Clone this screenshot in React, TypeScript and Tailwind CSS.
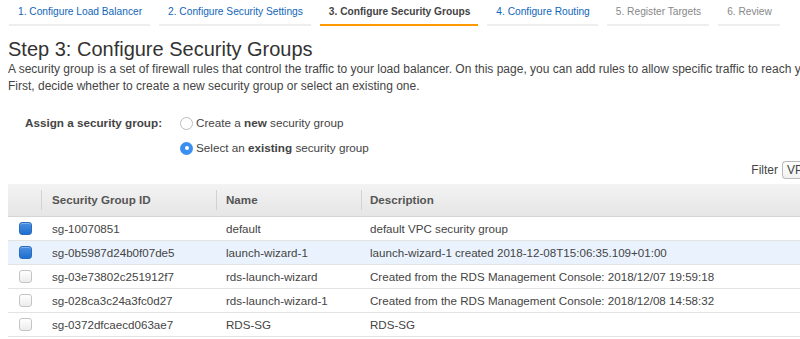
import { useState } from 'react'

interface SecurityGroup {
    id: string
    name: string
    description: string
}

const tabs = [
    { label: '1. Configure Load Balancer', state: 'done' },
    { label: '2. Configure Security Settings', state: 'done' },
    { label: '3. Configure Security Groups', state: 'active' },
    { label: '4. Configure Routing', state: 'done' },
    { label: '5. Register Targets', state: 'todo' },
    { label: '6. Review', state: 'todo' },
]

const groups: SecurityGroup[] = [
    { id: 'sg-10070851', name: 'default', description: 'default VPC security group' },
    { id: 'sg-0b5987d24b0f07de5', name: 'launch-wizard-1', description: 'launch-wizard-1 created 2018-12-08T15:06:35.109+01:00' },
    { id: 'sg-03e73802c251912f7', name: 'rds-launch-wizard', description: 'Created from the RDS Management Console: 2018/12/07 19:59:18' },
    { id: 'sg-028ca3c24a3fc0d27', name: 'rds-launch-wizard-1', description: 'Created from the RDS Management Console: 2018/12/08 14:58:32' },
    { id: 'sg-0372dfcaecd063ae7', name: 'RDS-SG', description: 'RDS-SG' },
]

function Checkbox({ checked }: { checked: boolean }) {
    return checked ? (
        <span className="block w-[13px] h-[13px] rounded-[3px] bg-gradient-to-b from-[#4a90e2] to-[#1f6fcf] border border-[#2a6cc0] shadow-[inset_0_1px_0_rgba(255,255,255,0.3)]" />
    ) : (
        <span className="block w-[13px] h-[13px] rounded-[3px] bg-gradient-to-b from-white to-[#ececec] border border-[#c4c4c4]" />
    )
}

function Radio({ on }: { on: boolean }) {
    return on ? (
        <span className="flex items-center justify-center w-[13px] h-[13px] rounded-full bg-[#3b8ff0]">
            <span className="w-[4px] h-[4px] rounded-full bg-white" />
        </span>
    ) : (
        <span className="w-[13px] h-[13px] rounded-full border border-[#bbb] bg-white" />
    )
}

export default function App() {
    const [selected, setSelected] = useState<string[]>(['sg-10070851', 'sg-0b5987d24b0f07de5'])
    const [mode, setMode] = useState<'new' | 'existing'>('existing')

    const toggle = (id: string) => {
        setSelected(prev => prev.includes(id) ? prev.filter(x => x !== id) : [...prev, id])
    }

    return (
        <div className="w-[800px] h-[339px] overflow-hidden bg-white text-[#444] font-['Liberation_Sans',Arial,sans-serif]">
            {/* wizard tabs */}
            <div className="flex gap-[9px] pl-[9px] pt-[4px] whitespace-nowrap">
                {tabs.map(tab => (
                    <div
                        key={tab.label}
                        className={`
                            pl-[9px]
                            pr-[8px]
                            h-[22px]
                            text-[10.2px]
                            leading-[16px]
                            border-b-2
                            ${tab.state === 'active' ? 'border-[#f90] text-[#444] font-bold' : 'border-[#eee]'}
                            ${tab.state === 'done' ? 'text-[#1166bb]' : ''}
                            ${tab.state === 'todo' ? 'text-[#888]' : ''}
                        `}
                    >
                        {tab.label}
                    </div>
                ))}
            </div>

            <div className="px-[8px] whitespace-nowrap">
                <h1 className="text-[20px] leading-[24px] mt-[11px] text-[#333]">Step 3: Configure Security Groups</h1>
                <p className="text-[12px] leading-[17px]">
                    A security group is a set of firewall rules that control the traffic to your load balancer. On this page, you can add rules to allow specific traffic to reach your load balancer.
                </p>
                <p className="text-[12px] leading-[17px]">
                    First, decide whether to create a new security group or select an existing one.
                </p>
            </div>

            {/* assign */}
            <div className="flex mt-[20px] pl-[25px] text-[11.7px]">
                <div className="w-[155px] font-bold leading-[16px]">Assign a security group:</div>
                <div className="flex flex-col gap-[9px]">
                    <label className="flex items-center gap-[3px] leading-[16px] cursor-pointer" onClick={() => setMode('new')}>
                        <Radio on={mode === 'new'} />
                        <span>Create a <b>new</b> security group</span>
                    </label>
                    <label className="flex items-center gap-[3px] leading-[16px] cursor-pointer" onClick={() => setMode('existing')}>
                        <Radio on={mode === 'existing'} />
                        <span>Select an <b>existing</b> security group</span>
                    </label>
                </div>
            </div>

            {/* filter */}
            <div className="flex justify-end items-center gap-[4px] mt-[5px] text-[12px] h-[18px]">
                <span>Filter</span>
                <span className="w-[18px] h-[18px] border border-r-0 border-[#bbb] rounded-l-[4px] pl-[4px] leading-[16px] bg-gradient-to-b from-white to-[#f2f2f2] overflow-hidden whitespace-nowrap">VPC</span>
            </div>

            {/* table */}
            <div className="ml-[8px] mt-[5px] text-[11.6px]">
                <div className="flex h-[33px] items-center bg-gradient-to-b from-[#f3f3f3] to-[#e6e6e6] border-b border-[#d5d5d5] font-bold text-[#555]">
                    <div className="w-[33px] h-[20px]" />
                    <div className="w-[175px] h-[20px] border-l border-[#d2d2d2] pl-[10px] leading-[20px]">Security Group ID</div>
                    <div className="w-[145px] h-[20px] border-l border-[#d2d2d2] pl-[9px] leading-[20px]">Name</div>
                    <div className="flex-1 h-[20px] border-l border-[#d2d2d2] pl-[8px] leading-[20px]">Description</div>
                </div>
                {groups.map((g, i) => (
                    <div
                        key={g.id}
                        onClick={() => toggle(g.id)}
                        className={`flex h-[24px] items-center border-b border-[#e3e3e3] whitespace-nowrap cursor-pointer ${i === 1 ? 'bg-[#eaf3fd]' : ''}`}
                    >
                        <div className="w-[33px] pl-[11px]">
                            <Checkbox checked={selected.includes(g.id)} />
                        </div>
                        <div className="w-[175px] pl-[11px]">{g.id}</div>
                        <div className="w-[145px] pl-[10px]">{g.name}</div>
                        <div className="flex-1 pl-[9px]">{g.description}</div>
                    </div>
                ))}
            </div>
        </div>
    )
}
